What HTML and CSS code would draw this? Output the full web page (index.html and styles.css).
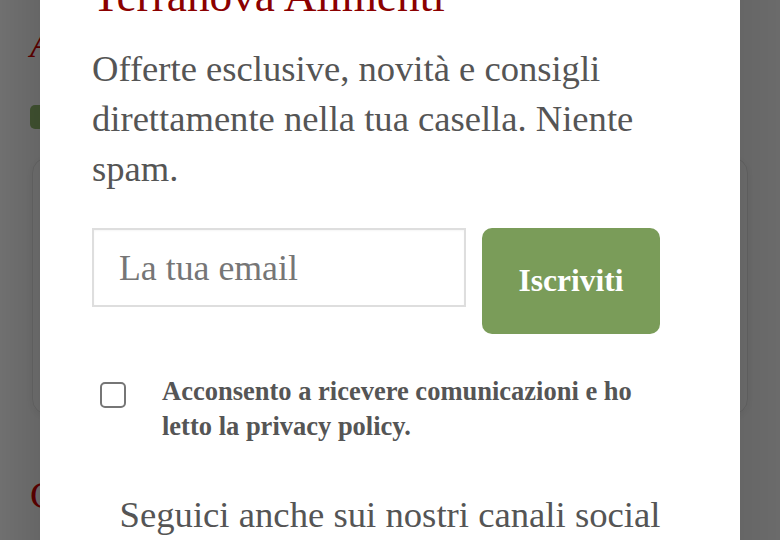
FILE: index.html
```html
<!DOCTYPE html>
<html lang="it">
<head>
<meta charset="utf-8">
<title>Newsletter</title>
<link rel="stylesheet" href="styles.css">
</head>
<body>
  <div class="page">
    <h2 class="page-heading">A</h2>
    <div class="tag-bar"></div>
    <div class="page-card"></div>
    <h2 class="page-heading page-heading--second">C</h2>
  </div>

  <div class="overlay"></div>

  <div class="modal">
    <h2 class="modal-title">Terranova Alimenti</h2>
    <p class="modal-text">Offerte esclusive, novità e consigli direttamente nella tua casella. Niente spam.</p>
    <form class="signup">
      <input class="signup-input" type="email" placeholder="La tua email">
      <button class="signup-btn" type="button">Iscriviti</button>
    </form>
    <label class="consent">
      <span class="consent-box"></span>
      <span class="consent-text">Acconsento a ricevere comunicazioni e ho letto la privacy policy.</span>
    </label>
    <p class="social">Seguici anche sui nostri canali social</p>
  </div>
</body>
</html>
```

FILE: styles.css
```css
* { box-sizing: border-box; }

html, body {
  margin: 0;
  padding: 0;
  height: 100%;
  overflow: hidden;
}

body {
  background: #fff;
  font-family: "Liberation Serif", "Times New Roman", serif;
}

.page {
  padding: 24px 32px 0 30px;
}

.page-heading {
  margin: 0;
  font-size: 38px;
  line-height: 40px;
  font-weight: 400;
  font-style: italic;
  color: #d40000;
}

.page-heading--second {
  margin-top: 60px;
  font-style: normal;
}

.tag-bar {
  margin-top: 41px;
  width: 120px;
  height: 24px;
  border-radius: 5px;
  background: #93bb6f;
}

.page-card {
  margin-top: 28px;
  margin-left: 2px;
  height: 258px;
  border: 1px solid #e6e6e6;
  border-radius: 16px;
  box-shadow: 0 2px 8px rgba(0,0,0,0.06);
}

.overlay {
  position: fixed;
  inset: 0;
  background: linear-gradient(to right,
    rgba(0,0,0,0.56) 0,
    rgba(0,0,0,0.6) 40px,
    rgba(0,0,0,0.6) 740px,
    rgba(0,0,0,0.58) 780px);
}

.modal {
  position: fixed;
  left: 40px;
  top: -30px;
  width: 700px;
  height: 640px;
  background: #fff;
  padding: 0 52px;
}

.modal-title {
  margin: 0;
  font-size: 45.3px;
  line-height: 52px;
  font-weight: 400;
  color: #8b0000;
}

.modal-text {
  margin: 22px 0 0;
  font-size: 36.6px;
  line-height: 50px;
  color: #555;
}

.signup {
  margin-top: 34px;
  display: flex;
  align-items: flex-start;
  gap: 16px;
}

.signup-input {
  width: 374px;
  height: 79px;
  margin: 0;
  border: 2px solid #dedede;
  border-radius: 0;
  padding: 0 0 0 25px;
  font-family: "Liberation Serif", "Times New Roman", serif;
  font-size: 35.8px;
  color: #555;
  background: #fff;
  box-shadow: inset 0 1px 2px rgba(0,0,0,0.04);
  outline: none;
}

.signup-input::placeholder {
  color: #767676;
}

.signup-btn {
  width: 178px;
  height: 106px;
  margin: 0;
  border: 0;
  border-radius: 10px;
  background: #7a9c59;
  color: #fff;
  font-family: "Liberation Serif", "Times New Roman", serif;
  font-size: 31.5px;
  font-weight: 700;
  padding: 0;
}

.consent {
  margin-top: 40px;
  display: flex;
  align-items: flex-start;
  padding-left: 8px;
}

.consent-box {
  flex: none;
  width: 26px;
  height: 26px;
  margin-top: 8px;
  border: 2px solid #767676;
  border-radius: 5px;
  background: #fff;
}

.consent-text {
  margin-left: 36px;
  max-width: 500px;
  font-size: 26.5px;
  line-height: 35px;
  font-weight: 700;
  color: #555;
}

.social {
  margin: 46px 0 0;
  text-align: center;
  font-size: 36.7px;
  line-height: 50px;
  color: #555;
}
```
